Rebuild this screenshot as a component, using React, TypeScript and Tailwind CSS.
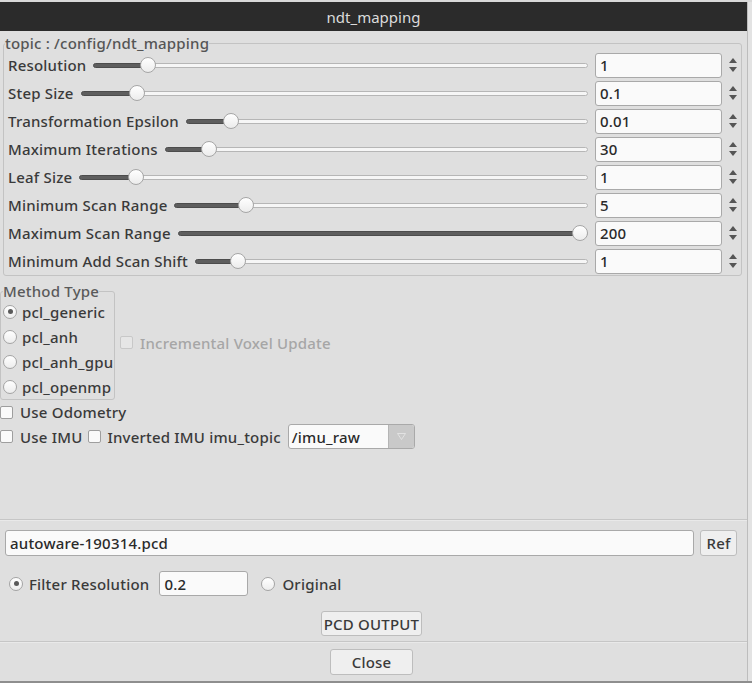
import React from "react";

const FONT = { fontFamily: '"Noto Sans", "DejaVu Sans", sans-serif', letterSpacing: "0.2px" };

type Row = { label: string; value: string; f: number };
const rows: Row[] = [
  { label: "Resolution", value: "1", f: 0.098 },
  { label: "Step Size", value: "0.1", f: 0.098 },
  { label: "Transformation Epsilon", value: "0.01", f: 0.095 },
  { label: "Maximum Iterations", value: "30", f: 0.09 },
  { label: "Leaf Size", value: "1", f: 0.098 },
  { label: "Minimum Scan Range", value: "5", f: 0.16 },
  { label: "Maximum Scan Range", value: "200", f: 1 },
  { label: "Minimum Add Scan Shift", value: "1", f: 0.093 },
];

function Slider({ f }: { f: number }) {
  return (
    <div className="flex-1 flex items-center h-[16px] min-w-0">
      <div
        className="h-[5px] rounded-l-full bg-[#5e5e5e] border border-[#4c4c4c] shrink-0"
        style={{ width: `calc((100% - 16px) * ${f} + 6px)` }}
      />
      <div className="w-[16px] h-[16px] shrink-0 -ml-[6px] rounded-full border border-[#a6a6a6] bg-gradient-to-b from-[#ffffff] to-[#ececec] relative z-10" />
      <div className="flex-1 h-[5px] rounded-r-full bg-[#f6f6f6] border border-[#b6b6b6] -ml-[6px] min-w-0" />
    </div>
  );
}

function SpinArrows() {
  return (
    <div className="w-[17px] flex flex-col items-center justify-center gap-[4px] ml-[2px]">
      <svg width="8" height="5" viewBox="0 0 8 5">
        <polygon points="4,0 8,5 0,5" fill="#555" />
      </svg>
      <svg width="8" height="5" viewBox="0 0 8 5">
        <polygon points="0,0 8,0 4,5" fill="#555" />
      </svg>
    </div>
  );
}

function Radio({ checked }: { checked?: boolean }) {
  return (
    <div className="w-[14px] h-[14px] rounded-full border border-[#a4a4a4] bg-gradient-to-b from-[#ffffff] to-[#ededed] flex items-center justify-center shrink-0">
      {checked && <div className="w-[5px] h-[5px] rounded-full bg-[#5a5a5a]" />}
    </div>
  );
}

function Check({ disabled }: { disabled?: boolean }) {
  return (
    <div
      className={
        "w-[13px] h-[13px] rounded-[2px] border shrink-0 " +
        (disabled ? "border-[#c8c8c8] bg-[#e6e6e6]" : "border-[#9e9e9e] bg-[#fafafa]")
      }
    />
  );
}

export default function App() {
  return (
    <div
      className="w-[752px] h-[683px] bg-[#cfcfcf] overflow-hidden text-[15px] font-medium text-[#3a3a3a] leading-[16px]"
      style={FONT}
    >
      <div className="h-[2px] bg-[#d9d9d9]" />
      <div className="flex h-[679px]">
        <div className="w-[747px] flex flex-col">
          <div className="h-[29px] bg-[#2b2b2b] flex items-center justify-center text-[#dcdcdc] text-[15px] font-normal tracking-normal">
            ndt_mapping
          </div>
          <div className="flex-1 bg-[#dfdfdf] flex flex-col">
            <fieldset className="ml-[3px] mt-[4px] w-[739px] border border-[#c3c3c3] rounded-[3px] px-0 pb-0">
              <legend className="ml-[1px] text-[#555] leading-[16px]">topic : /config/ndt_mapping</legend>
              <div className="flex flex-col pl-[4px]">
                {rows.map((r) => (
                  <div key={r.label} className="h-[28px] flex items-center">
                    <span className="whitespace-nowrap mr-[7px]">{r.label}</span>
                    <Slider f={r.f} />
                    <div className="ml-[7px] w-[127px] h-[25px] border border-[#a9a9a9] rounded-[3px] bg-[#fafafa] flex items-center pl-[4px] text-[#2a2a2a]">
                      {r.value}
                    </div>
                    <SpinArrows />
                  </div>
                ))}
              </div>
            </fieldset>

            <div className="flex items-center mt-[7px]">
              <fieldset className="w-[115px] border border-[#c3c3c3] rounded-[3px] px-0 pb-0">
                <legend className="ml-[2px] text-[#5a5a5a] leading-[16px]">Method Type</legend>
                <div className="flex flex-col pl-[2px]">
                  {["pcl_generic", "pcl_anh", "pcl_anh_gpu", "pcl_openmp"].map((m, i) => (
                    <div key={m} className="h-[25px] flex items-center gap-[5px]">
                      <Radio checked={i === 0} />
                      <span>{m}</span>
                    </div>
                  ))}
                </div>
              </fieldset>
              <div className="flex items-center gap-[7px] ml-[5px] mt-[2px] text-[#a6a6a6]">
                <Check disabled />
                <span>Incremental Voxel Update</span>
              </div>
            </div>

            <div className="h-[24px] flex items-center gap-[7px]">
              <Check />
              <span>Use Odometry</span>
            </div>
            <div className="h-[25px] flex items-center">
              <Check />
              <span className="ml-[7px]">Use IMU</span>
              <div className="ml-[6px]">
                <Check />
              </div>
              <span className="ml-[6px]">Inverted IMU imu_topic</span>
              <div className="ml-[7px] w-[127px] h-[25px] border border-[#a9a9a9] rounded-[3px] bg-[#fafafa] flex overflow-hidden">
                <div className="flex-1 flex items-center pl-[3px] text-[#2a2a2a]">/imu_raw</div>
                <div className="w-[26px] bg-[#c9c9c9] border-l border-[#b5b5b5] flex items-center justify-center">
                  <svg width="9" height="7" viewBox="0 0 9 7">
                    <polygon points="0.5,0.5 8.5,0.5 4.5,6.5" fill="none" stroke="#e2e2e2" strokeWidth="1" />
                  </svg>
                </div>
              </div>
            </div>

            <div className="mt-[70px] h-[2px] border-t border-[#c6c6c6] bg-[#e9e9e9]" />

            <div className="mt-[9px] flex items-center">
              <div className="ml-[5px] w-[689px] h-[26px] border border-[#a9a9a9] rounded-[3px] bg-[#fafafa] flex items-center pl-[4px] text-[#2a2a2a]">
                autoware-190314.pcd
              </div>
              <div className="ml-[6px] w-[37px] h-[26px] border border-[#bdbdbd] rounded-[3px] bg-[#efefef] flex items-center justify-center">
                Ref
              </div>
            </div>

            <div className="mt-[15px] h-[25px] flex items-center">
              <div className="ml-[9px]">
                <Radio checked />
              </div>
              <span className="ml-[6px]">Filter Resolution</span>
              <div className="ml-[10px] w-[89px] h-[25px] border border-[#a9a9a9] rounded-[3px] bg-[#fafafa] flex items-center pl-[4px] text-[#2a2a2a]">
                0.2
              </div>
              <div className="ml-[13px]">
                <Radio />
              </div>
              <span className="ml-[7px]">Original</span>
            </div>

            <div className="mt-[15px] flex justify-center">
              <div className="ml-[-4px] w-[101px] h-[25px] border border-[#bdbdbd] rounded-[3px] bg-[#efefef] flex items-center justify-center">
                PCD OUTPUT
              </div>
            </div>

            <div className="mt-[5px] h-[2px] border-t border-[#c6c6c6] bg-[#e9e9e9]" />

            <div className="mt-[6px] flex justify-center">
              <div className="ml-[-4px] w-[83px] h-[26px] border border-[#bdbdbd] rounded-[3px] bg-[#efefef] flex items-center justify-center">
                Close
              </div>
            </div>
          </div>
        </div>
        <div className="flex-1 bg-[#e3e3e3] border-l border-[#bdbdbd]" />
      </div>
      <div className="h-[2px] bg-[#8e8e8e]" />
    </div>
  );
}
